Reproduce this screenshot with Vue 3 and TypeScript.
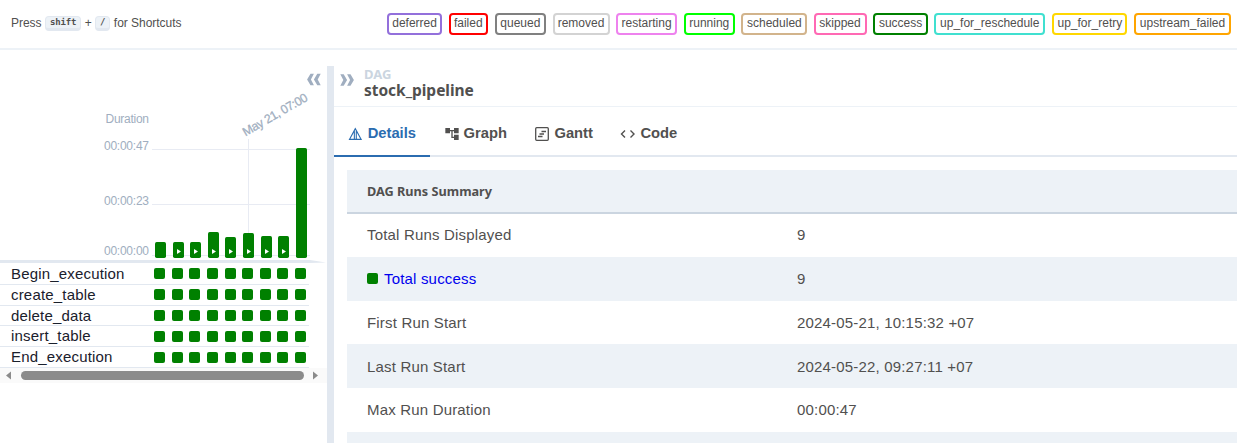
<script setup lang="ts">
interface State { name: string; color: string }
const states: State[] = [
  { name: 'deferred', color: 'mediumpurple' },
  { name: 'failed', color: 'red' },
  { name: 'queued', color: 'gray' },
  { name: 'removed', color: 'lightgrey' },
  { name: 'restarting', color: 'violet' },
  { name: 'running', color: 'lime' },
  { name: 'scheduled', color: 'tan' },
  { name: 'skipped', color: 'hotpink' },
  { name: 'success', color: 'green' },
  { name: 'up_for_reschedule', color: 'turquoise' },
  { name: 'up_for_retry', color: 'gold' },
  { name: 'upstream_failed', color: 'orange' },
]
interface Run { x: number; height: number; manual: boolean }
const runs: Run[] = [
  { x: 155, height: 16, manual: false },
  { x: 173, height: 16, manual: true },
  { x: 190, height: 16, manual: true },
  { x: 208, height: 26, manual: true },
  { x: 225, height: 21, manual: true },
  { x: 243, height: 25, manual: true },
  { x: 261, height: 22, manual: true },
  { x: 278, height: 22, manual: true },
  { x: 296, height: 110, manual: false },
]
const ticks = [
  { label: '00:00:47', text: 150, line: 149 },
  { label: '00:00:23', text: 205, line: 204 },
  { label: '00:00:00', text: 255, line: 255 },
]
const tasks = ['Begin_execution', 'create_table', 'delete_data', 'insert_table', 'End_execution']
const rows = [
  { label: 'Total Runs Displayed', value: '9', success: false },
  { label: 'Total success', value: '9', success: true },
  { label: 'First Run Start', value: '2024-05-21, 10:15:32 +07', success: false },
  { label: 'Last Run Start', value: '2024-05-22, 09:27:11 +07', success: false },
  { label: 'Max Run Duration', value: '00:00:47', success: false },
  { label: '', value: '', success: false },
]
</script>

<template>
  <div class="page">
    <header class="topbar">
      <div class="hint">Press <kbd>shift</kbd><span class="plus">+</span><kbd>/</kbd> <span class="for">for Shortcuts</span></div>
      <div class="legend">
        <span v-for="s in states" :key="s.name" class="state" :style="{ borderColor: s.color }">{{ s.name }}</span>
      </div>
    </header>
    <main class="body">
      <section class="left">
        <svg class="chart" width="327" height="197" viewBox="0 66 327 197">
          <g class="grid">
            <rect v-for="t in ticks" :key="t.label" x="152" :y="t.line" width="158" height="1" />
            <rect x="248" y="139" width="1" height="116" />
          </g>
          <g class="axis">
            <text x="149" y="123" text-anchor="end" textLength="43.5">Duration</text>
            <text v-for="t in ticks" :key="t.label" x="149" :y="t.text" text-anchor="end" textLength="45">{{ t.label }}</text>
            <text class="date" transform="translate(245.5 136.5) rotate(-30)" textLength="73">May 21, 07:00</text>
          </g>
          <path class="chev" d="M310.500 73.700h3.400l-3 5.800 3 5.800h-3.400l-3.400-5.800zM317.300 73.700h3.400l-3 5.800 3 5.800h-3.400l-3.400-5.800z" />
          <g v-for="r in runs" :key="r.x">
            <rect class="run" :x="r.x" :y="258 - r.height" width="11" :height="r.height" rx="1.7" />
            <path v-if="r.manual" class="play" :d="`M${r.x + 4} 249v5l4-2.5z`" />
          </g>
          <path class="edge" d="M0 260H310L326 262.500 310 263H0z" />
        </svg>
        <div class="tasks">
          <div v-for="t in tasks" :key="t" class="task">
            <span class="name">{{ t }}</span>
            <div class="cells"><i v-for="r in runs" :key="r.x" /></div>
          </div>
        </div>
        <div class="scroll">
          <svg width="327" height="15" viewBox="0 0 327 15">
            <path d="M11 3.500v8L6 7.500zM313 3.500v8l5-4z" />
            <rect x="21" y="3" width="283" height="9" rx="4.500" />
          </svg>
        </div>
      </section>
      <div class="divider" />
      <section class="right">
        <div class="crumb">
          <svg class="expand" width="16" height="14" viewBox="0 0 16 14"><path class="chev" d="M3.700 1.200H.3l3 5.800-3 5.800h3.400L7.100 7zM10.500 1.200H7.100l3 5.800-3 5.800h3.400L13.900 7z" /></svg>
          <div>
            <div class="kind">DAG</div>
            <div class="dag">stock_pipeline</div>
          </div>
        </div>
        <nav class="tabs">
          <a class="tab active">
            <svg width="16" height="16" viewBox="0 0 16 16"><path d="M7.500 2.500 1.500 13.500H13.500zM6.500 5V13.500M8.500 5V13.500" fill="none" stroke="currentColor" stroke-width="1.100" /></svg>
            <span>Details</span>
          </a>
          <a class="tab">
            <svg width="16" height="16" viewBox="0 0 24 24"><path fill="currentColor" d="M22 11V3h-7v3H9V3H2v8h7V8h2v10h4v3h7v-8h-7v3h-2V8h2v3z" /></svg>
            <span>Graph</span>
          </a>
          <a class="tab">
            <svg width="16" height="16" viewBox="0 0 16 16"><rect x="1.700" y="1.700" width="12.600" height="12.600" rx="1" fill="none" stroke="currentColor" stroke-width="1.300" /><path d="M7.500 5.500h4.500M5.500 8h4.500M4 10.500h4.500" fill="none" stroke="currentColor" stroke-width="1.300" /></svg>
            <span>Gantt</span>
          </a>
          <a class="tab">
            <svg width="16" height="16" viewBox="0 0 16 16"><path d="M5 4.500 1.500 8l3.500 3.500M10.500 4.500 14 8l-3.500 3.500" fill="none" stroke="currentColor" stroke-width="1.400" /></svg>
            <span>Code</span>
          </a>
        </nav>
        <div class="table">
          <div class="thead">DAG Runs Summary</div>
          <div class="rows">
            <div v-for="(r, i) in rows" :key="i" class="row">
              <span class="label" :class="{ link: r.success }"><i v-if="r.success" />{{ r.label }}</span>
              <span>{{ r.value }}</span>
            </div>
          </div>
        </div>
      </section>
    </main>
  </div>
</template>

<style>
body { margin: 0; overflow: hidden; background: #fff; }
</style>

<style scoped>
.page { width: 1237px; height: 443px; overflow: hidden; display: flex; flex-direction: column; font-family: "Liberation Sans", Arial, sans-serif; color: #51504f; }
.topbar { height: 48px; flex: none; border-bottom: 2px solid #edf2f7; display: flex; justify-content: space-between; align-items: flex-start; padding: 0 6px 0 11px; }
.hint { display: flex; align-items: center; font-size: 12px; line-height: 16px; padding-top: 15px; letter-spacing: -0.030px; }
kbd { box-sizing: border-box; height: 15px; margin-left: 3.500px; padding: 0 4px; border: 1px solid #e2e8f0; border-bottom-width: 3px; border-radius: 4px; background: #edf2f7; font: bold 9px/11px "DejaVu Sans Mono", monospace; letter-spacing: -0.200px; }
.plus { margin-left: 3.500px; }
.for { margin-left: 3.500px; }
.legend { display: grid; grid-template-columns: 55px 39px 51px 57px 61px 51px 66px 53px 55px 111px 75px 97px; column-gap: 6.640px; padding-top: 13px; }
.state { box-sizing: border-box; height: 22px; border: 2px solid; border-radius: 4px; font-size: 12px; line-height: 16px; text-align: center; white-space: nowrap; }
.state:nth-child(n+3):nth-child(-n+7) { margin: 0 -0.500px 0 0.500px; }
.state:nth-child(7) { margin: 0 -0.900px 0 0.900px; }
.state:nth-child(10) { margin: 0 0.500px 0 -0.500px; }
.body { flex: 1; display: flex; padding-top: 16px; min-height: 0; }
.left { width: 327px; flex: none; }
.chart { display: block; }
.grid { fill: #e8ebf3; }
.axis { font-size: 12px; fill: #a0aec0; }
.date { font-size: 12.300px; stroke: #a0aec0; stroke-width: 0.250px; }
.chev { fill: #a0aec0; }
.run { fill: green; }
.play { fill: #fff; }
.edge { fill: #e2e8f0; }
.tasks { width: 309px; padding-top: 1px; }
.task { box-sizing: border-box; height: 20.800px; border-bottom: 1px solid #e2e8f0; display: flex; justify-content: space-between; align-items: center; padding: 0 3px 0 11px; font-size: 15px; letter-spacing: 0.180px; color: #1a202c; }
.name { margin-top: -0.700px; }
.cells { display: flex; width: 152px; justify-content: space-between; }
.cells i, .label i { width: 11px; height: 11px; border-radius: 2px; background: green; }
.scroll { height: 15px; background: #fafafa; }
.scroll svg { display: block; fill: #8b8b8b; }
.divider { width: 7px; flex: none; background: #e2e8f0; }
.right { flex: 1; min-width: 0; }
.crumb { box-sizing: border-box; height: 41px; border-bottom: 1px solid #edf2f7; display: flex; padding-left: 6px; }
.expand { margin: 7px 8px 0 0; }
.kind { font: bold 13px/17px "Noto Sans", sans-serif; color: #cbd5e0; }
.dag { font: bold 15.500px/15px "Noto Sans", sans-serif; letter-spacing: -0.030px; }
.tabs { box-sizing: border-box; height: 50px; border-bottom: 2px solid #e2e8f0; display: flex; }
.tab { box-sizing: border-box; height: 50px; display: flex; align-items: center; gap: 4px; padding: 4px 14px 0; border-bottom: 2px solid transparent; font-weight: bold; font-size: 14.750px; }
.tab svg { position: relative; top: 1px; }
.active { width: 96px; color: #2b6cb0; border-color: #2b6cb0; }
.tab:not(.active) { margin-left: -0.500px; }
.table { margin: 13px 0 0 13px; }
.thead { position: relative; z-index: 1; height: 42px; background: #edf2f7; border-bottom: 2px solid #cbd5e0; padding-left: 20px; font: bold 12.700px/43px "Noto Sans", sans-serif; }
.rows { margin-top: -0.900px; }
.row { height: 43.750px; display: grid; grid-template-columns: 430px 1fr; align-items: center; padding-left: 20px; font-size: 15px; letter-spacing: 0.180px; }
.row:nth-child(even) { background: #edf2f7; }
.label { display: flex; align-items: center; gap: 6px; }
.link { color: #00e; }
</style>
